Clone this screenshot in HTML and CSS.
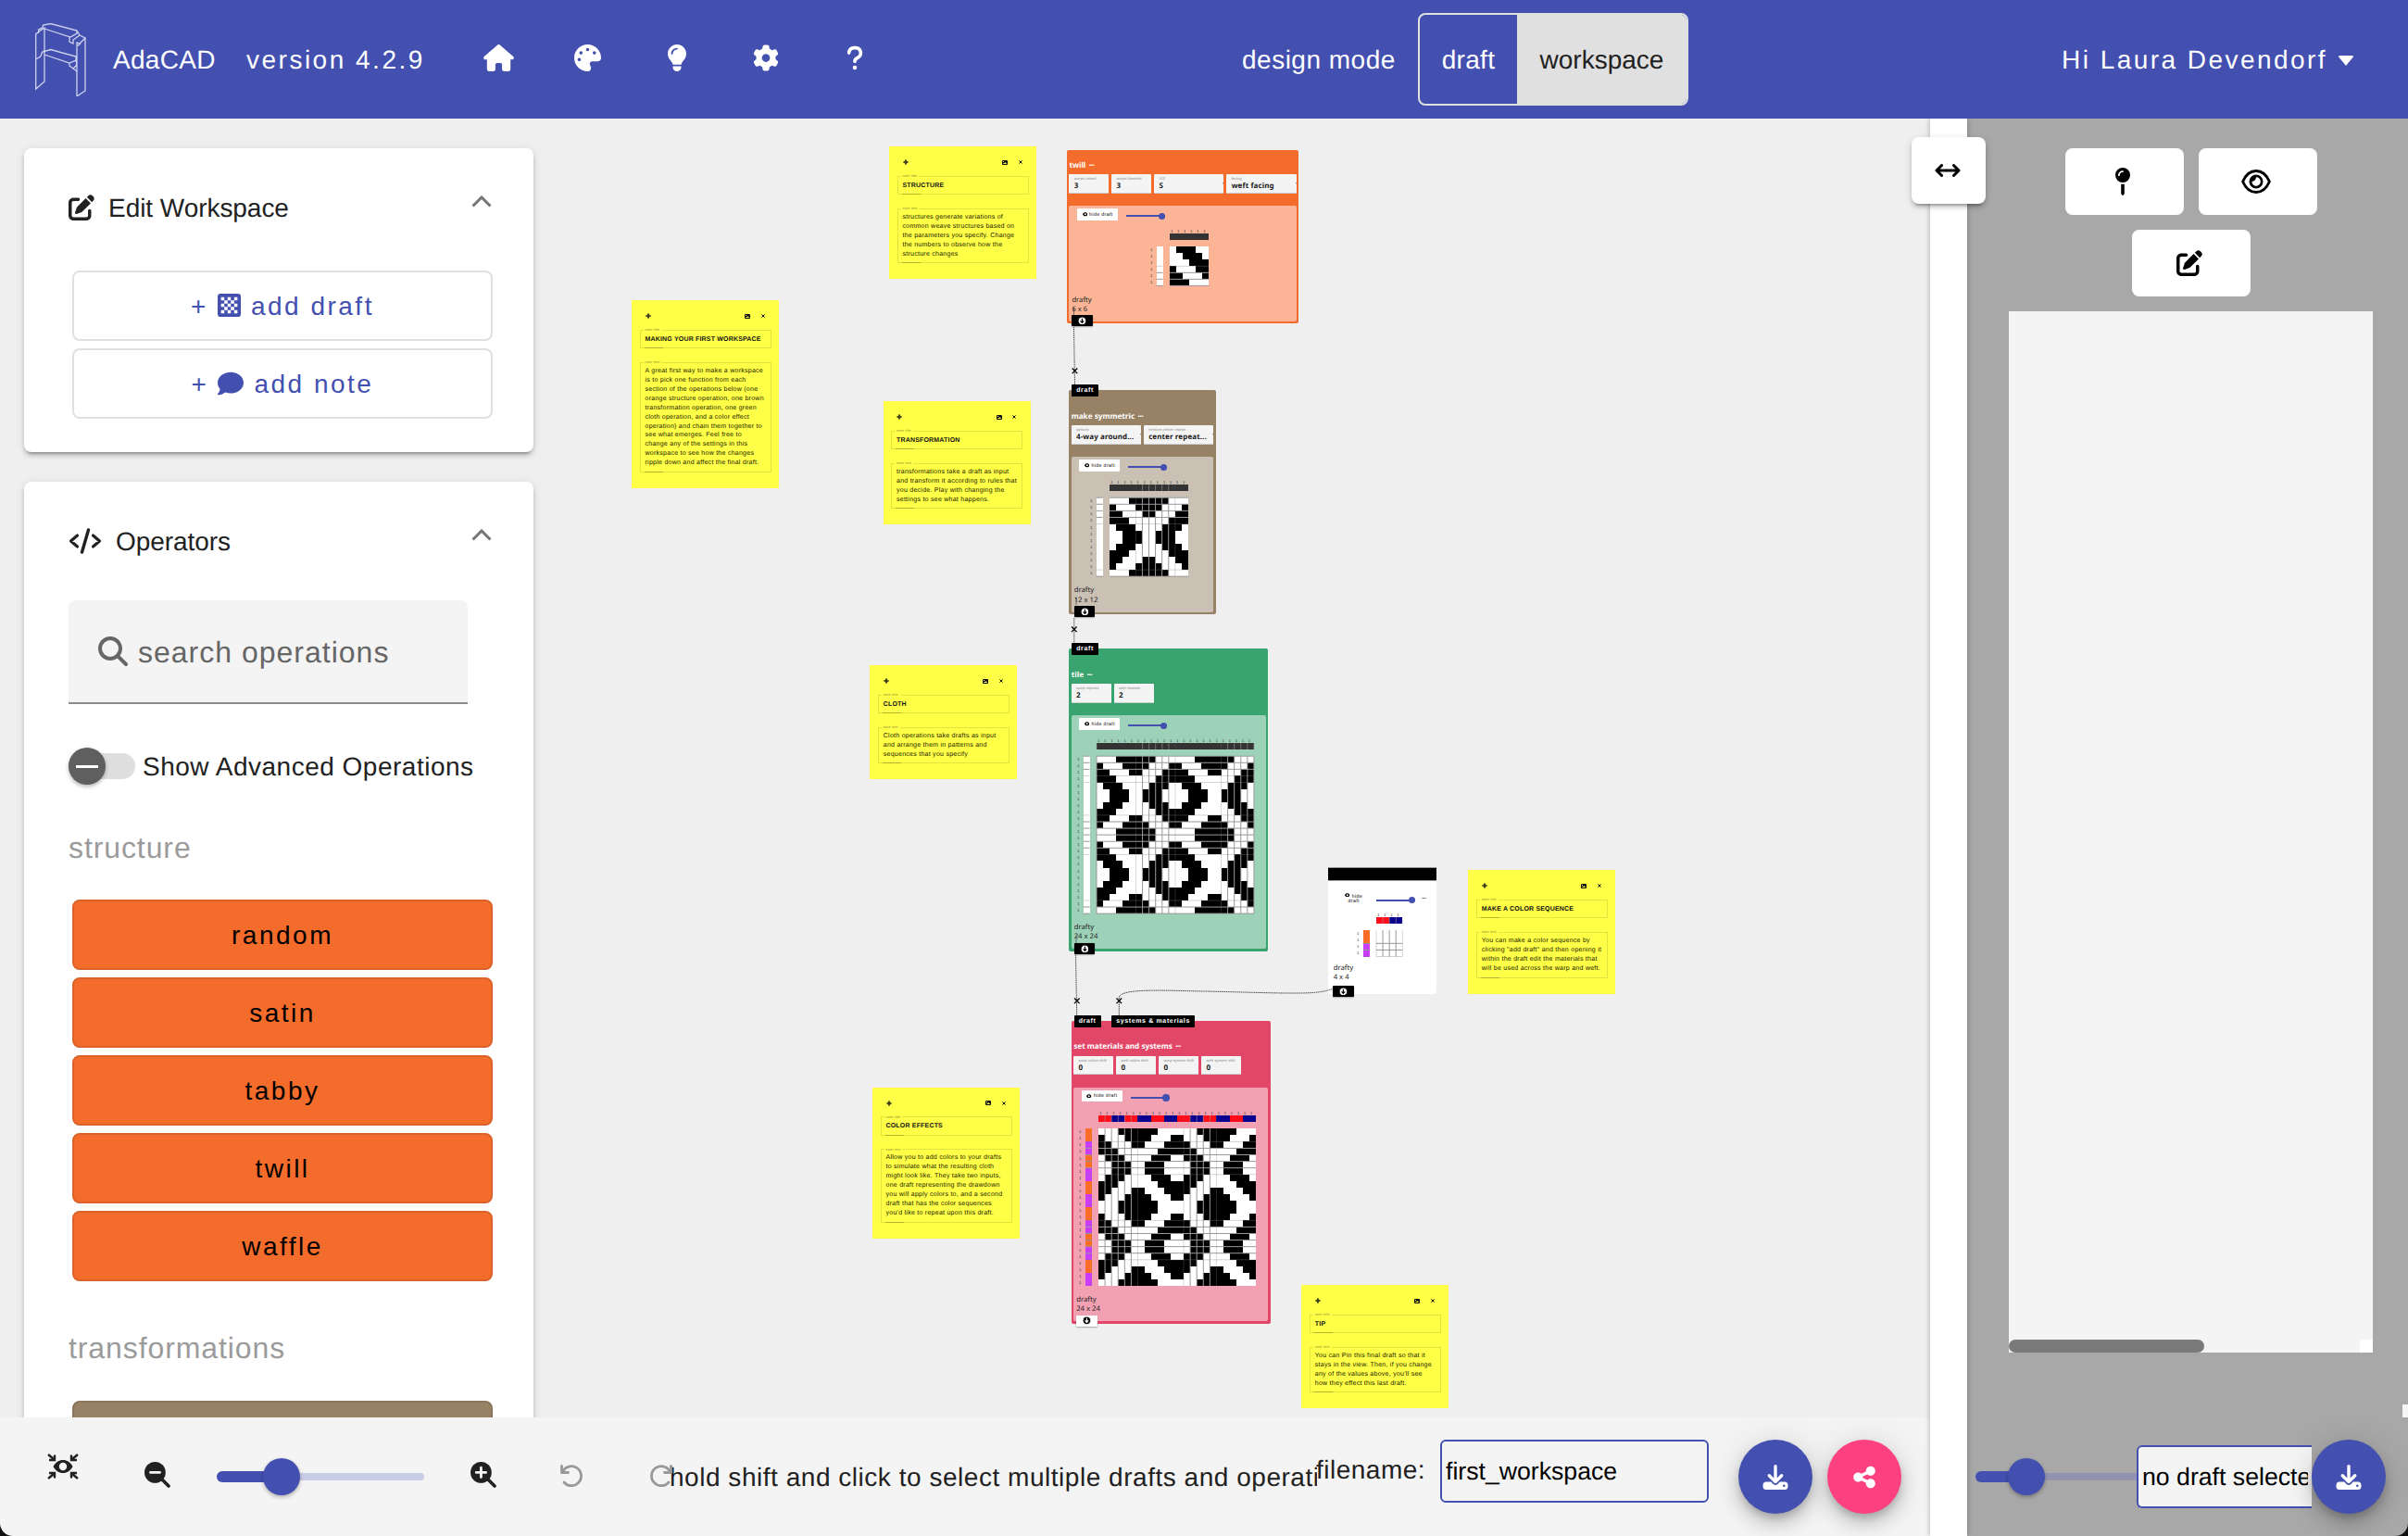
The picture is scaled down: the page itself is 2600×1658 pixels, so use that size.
FILE: index.html
```html
<!DOCTYPE html>
<html lang="en">
<head>
<meta charset="utf-8">
<title>AdaCAD</title>
<link rel="stylesheet" href="styles.css">
</head>
<body>
<svg class="defs" width="0" height="0">
  <symbol id="i-home" viewBox="0 0 576 512"><path d="M575.8 255.5c0 18-15 32.1-32 32.1h-32l.7 160.2c0 2.7-.2 5.4-.5 8.1V472c0 22.1-17.9 40-40 40H456c-1.1 0-2.2 0-3.3-.1c-1.4 .1-2.8 .1-4.2 .1H416 392c-22.1 0-40-17.9-40-40V448 384c0-17.7-14.3-32-32-32H256c-17.7 0-32 14.3-32 32v64 24c0 22.1-17.9 40-40 40H160 128.1c-1.5 0-3-.1-4.5-.2c-1.2 .1-2.4 .2-3.6 .2H104c-22.1 0-40-17.9-40-40V360c0-.9 0-1.9 .1-2.8V287.6H32c-18 0-32-14-32-32.1c0-9 3-17 10-24L266.4 8c7-7 15-8 22-8s15 2 21 7L564.8 231.5c8 7 12 15 11 24z"/></symbol>
  <symbol id="i-palette" viewBox="0 0 512 512"><path d="M512 256c0 .9 0 1.8 0 2.7c-.4 36.5-33.6 61.3-70.1 61.3H344c-26.5 0-48 21.5-48 48c0 3.4 .4 6.7 1 9.9c2.1 10.2 6.5 20 10.8 29.9c6.1 13.8 12.1 27.5 12.1 42c0 31.8-21.6 60.7-53.4 62c-3.5 .1-7 .2-10.6 .2C114.6 512 0 397.4 0 256S114.6 0 256 0S512 114.6 512 256zM128 288a32 32 0 1 0 -64 0 32 32 0 1 0 64 0zm0-96a32 32 0 1 0 0-64 32 32 0 1 0 0 64zM288 96a32 32 0 1 0 -64 0 32 32 0 1 0 64 0zm96 96a32 32 0 1 0 0-64 32 32 0 1 0 0 64z"/></symbol>
  <symbol id="i-bulb" viewBox="0 0 384 512"><path d="M272 384c9.6-31.9 29.5-59.1 49.2-86.2c5.2-7.1 10.4-14.2 15.4-21.4c19.8-28.5 31.4-63 31.4-100.3C368 78.8 289.2 0 192 0S16 78.8 16 176c0 37.3 11.6 71.9 31.4 100.3c5 7.2 10.2 14.3 15.4 21.4c19.8 27.1 39.7 54.4 49.2 86.2H272zM192 512c44.2 0 80-35.8 80-80V416H112v16c0 44.2 35.8 80 80 80zM112 176c0 8.8-7.2 16-16 16s-16-7.2-16-16c0-61.9 50.1-112 112-112c8.8 0 16 7.2 16 16s-7.2 16-16 16c-44.2 0-80 35.8-80 80z"/></symbol>
  <symbol id="i-gear" viewBox="0 0 512 512"><path d="M495.9 166.6c3.2 8.7 .5 18.4-6.4 24.6l-43.3 39.4c1.1 8.3 1.7 16.8 1.7 25.4s-.6 17.1-1.7 25.4l43.3 39.4c6.9 6.2 9.6 15.9 6.4 24.6c-4.4 11.9-9.7 23.3-15.8 34.3l-4.7 8.1c-6.6 11-14 21.4-22.1 31.2c-5.9 7.2-15.7 9.6-24.5 6.8l-55.7-17.7c-13.4 10.3-28.2 18.9-44 25.4l-12.5 57.1c-2 9.1-9 16.3-18.2 17.8c-13.8 2.3-28 3.5-42.5 3.5s-28.7-1.2-42.5-3.5c-9.2-1.5-16.2-8.7-18.2-17.8l-12.5-57.1c-15.8-6.5-30.6-15.1-44-25.4L83.1 425.9c-8.8 2.8-18.6 .3-24.5-6.8c-8.1-9.8-15.5-20.2-22.1-31.2l-4.7-8.1c-6.1-11-11.4-22.4-15.8-34.3c-3.2-8.7-.5-18.4 6.4-24.6l43.3-39.4C64.6 273.1 64 264.6 64 256s.6-17.1 1.7-25.4L22.4 191.2c-6.9-6.2-9.6-15.9-6.4-24.6c4.4-11.9 9.7-23.3 15.8-34.3l4.7-8.1c6.6-11 14-21.4 22.1-31.2c5.9-7.2 15.7-9.6 24.5-6.8l55.7 17.7c13.4-10.3 28.2-18.9 44-25.4l12.5-57.1c2-9.1 9-16.3 18.2-17.8C227.3 1.2 241.5 0 256 0s28.7 1.2 42.5 3.5c9.2 1.5 16.2 8.7 18.2 17.8l12.5 57.1c15.8 6.5 30.6 15.1 44 25.4l55.7-17.7c8.8-2.8 18.6-.3 24.5 6.8c8.1 9.8 15.5 20.2 22.1 31.2l4.7 8.1c6.1 11 11.4 22.4 15.8 34.3zM256 336a80 80 0 1 0 0-160 80 80 0 1 0 0 160z"/></symbol>
  <symbol id="i-question" viewBox="0 0 320 512"><path d="M80 160c0-35.3 28.7-64 64-64h32c35.3 0 64 28.7 64 64v3.6c0 21.8-11.1 42.1-29.4 53.8l-42.2 27.1c-25.2 16.2-40.4 44.1-40.4 74V320c0 17.7 14.3 32 32 32s32-14.3 32-32v-1.4c0-8.2 4.2-15.8 11-20.2l42.2-27.1c36.6-23.6 58.8-64.1 58.8-107.7V160c0-70.7-57.3-128-128-128H144C73.3 32 16 89.3 16 160c0 17.7 14.3 32 32 32s32-14.3 32-32zm80 320a40 40 0 1 0 0-80 40 40 0 1 0 0 80z"/></symbol>
  <symbol id="i-edit" viewBox="0 0 512 512"><path d="M471.6 21.7c-21.9-21.9-57.3-21.9-79.2 0L362.3 51.7l97.9 97.9 30.1-30.1c21.9-21.9 21.9-57.3 0-79.2L471.6 21.7zm-299.2 220c-6.1 6.1-10.8 13.6-13.5 21.9l-29.6 88.8c-2.9 8.6-.6 18.1 5.8 24.6s15.9 8.7 24.6 5.8l88.8-29.6c8.2-2.7 15.7-7.4 21.9-13.5L437.7 172.3 339.7 74.3 172.4 241.7zM96 64C43 64 0 107 0 160V416c0 53 43 96 96 96H352c53 0 96-43 96-96V320c0-17.7-14.3-32-32-32s-32 14.3-32 32v96c0 17.7-14.3 32-32 32H96c-17.7 0-32-14.3-32-32V160c0-17.7 14.3-32 32-32h96c17.7 0 32-14.3 32-32s-14.3-32-32-32H96z"/></symbol>
  <symbol id="i-comment" viewBox="0 0 512 512"><path d="M512 240c0 114.900-114.600 208-256 208c-37.100 0-72.300-6.400-104.100-17.900c-11.900 8.700-31.300 20.600-54.300 30.600C73.600 471.100 44.700 480 16 480c-6.500 0-12.300-3.900-14.800-9.900c-2.500-6-1.100-12.800 3.400-17.400c.3-.3 .7-.7 1.300-1.400c1.100-1.200 2.800-3.100 4.900-5.700c4.100-5 9.600-12.400 15.200-21.600c10-16.600 19.500-38.400 21.400-62.900C17.700 326.800 0 285.100 0 240C0 125.100 114.600 32 256 32s256 93.100 256 208z"/></symbol>
  <symbol id="i-board" viewBox="0 0 24 24"><path fill-rule="evenodd" d="M3 0h18a3 3 0 0 1 3 3v18a3 3 0 0 1-3 3H3a3 3 0 0 1-3-3V3a3 3 0 0 1 3-3zM3.500 3.500v3.400h3.400V3.500zm6.800 0v3.400h3.400V3.500zm6.800 0v3.400h3.400V3.500zM6.900 6.900v3.400h3.400V6.900zm6.800 0v3.400h3.400V6.900zM3.500 10.300v3.400h3.400v-3.400zm6.800 0v3.400h3.400v-3.400zm6.800 0v3.400h3.400v-3.400zM6.900 13.700v3.400h3.400v-3.400zm6.800 0v3.400h3.400v-3.400zM3.500 17.100v3.400h3.400v-3.400zm6.800 0v3.400h3.400v-3.400zm6.800 0v3.400h3.400v-3.400z"/></symbol>
  <symbol id="i-download" viewBox="0 0 512 512"><path d="M288 32c0-17.700-14.300-32-32-32s-32 14.300-32 32V274.700l-73.400-73.400c-12.500-12.500-32.800-12.500-45.300 0s-12.500 32.800 0 45.300l128 128c12.500 12.500 32.800 12.500 45.300 0l128-128c12.500-12.500 12.500-32.800 0-45.300s-32.800-12.500-45.300 0L288 274.700V32zM64 352c-35.300 0-64 28.700-64 64v32c0 35.300 28.700 64 64 64H448c35.300 0 64-28.700 64-64V416c0-35.300-28.700-64-64-64H346.500l-45.300 45.300c-25 25-65.500 25-90.500 0L165.500 352H64zm368 56a24 24 0 1 1 0 48 24 24 0 1 1 0-48z"/></symbol>
  <symbol id="i-share" viewBox="0 0 448 512"><path d="M352 224c53 0 96-43 96-96s-43-96-96-96s-96 43-96 96c0 4 .2 8 .7 11.900l-94.100 47C145.400 170.200 121.900 160 96 160c-53 0-96 43-96 96s43 96 96 96c25.900 0 49.400-10.200 66.600-26.900l94.100 47c-.5 3.900-.7 7.800-.7 11.900c0 53 43 96 96 96s96-43 96-96s-43-96-96-96c-25.900 0-49.400 10.200-66.600 26.900l-94.100-47c.5-3.900 .7-7.800 .7-11.900s-.2-8-.7-11.900l94.100-47C302.600 213.800 326.100 224 352 224z"/></symbol>
  <symbol id="i-search" viewBox="0 0 512 512"><path d="M416 208c0 45.900-14.900 88.300-40 122.700L502.600 457.400c12.500 12.500 12.500 32.800 0 45.300s-32.800 12.500-45.300 0L330.700 376c-34.400 25.200-76.800 40-122.700 40C93.100 416 0 322.900 0 208S93.100 0 208 0S416 93.100 416 208zM208 352a144 144 0 1 0 0-288 144 144 0 1 0 0 288z"/></symbol>
  <symbol id="i-out" viewBox="0 0 28 28"><circle cx="11.400" cy="11.400" r="11.400"/><path d="M19 19l7 7" stroke="currentColor" stroke-width="3.600" stroke-linecap="round"/><path d="M6.500 11.400h10" stroke="#f4f4f4" stroke-width="2.800" stroke-linecap="round"/></symbol>
  <symbol id="i-in" viewBox="0 0 28 28"><circle cx="11.400" cy="11.400" r="11.400"/><path d="M19 19l7 7" stroke="currentColor" stroke-width="3.600" stroke-linecap="round"/><path d="M6.200 11.400h10.400M11.400 6.200v10.400" stroke="#f4f4f4" stroke-width="2.800" stroke-linecap="round"/></symbol>
  <symbol id="i-fit" viewBox="0 0 34 28"><path fill-rule="evenodd" d="M6.500 14C9 9.200 12.500 7 17 7s8 2.200 10.500 7C25 18.800 21.500 21 17 21S9 18.800 6.500 14zM17 9.800a4.200 4.200 0 1 0 0 8.400 4.200 4.200 0 1 0 0-8.400z"/><path d="M1 1l6 5M2 7h6V1.500M33 1l-6 5M32 7h-6V1.500M1 27l6-5M2 21h6v5.500M33 27l-6-5M32 21h-6v5.500" fill="none" stroke="currentColor" stroke-width="2.400"/></symbol>
  <symbol id="i-undo" viewBox="0 0 26 26"><path d="M2.500 2.500v7h7" fill="none" stroke="currentColor" stroke-width="2.800" stroke-linecap="round" stroke-linejoin="round"/><path d="M3.500 8.800A10.500 10.500 0 1 1 5 20" fill="none" stroke="currentColor" stroke-width="2.800" stroke-linecap="round"/></symbol>
  <symbol id="i-pin" viewBox="0 0 16 30"><path fill-rule="evenodd" d="M8 0a8 8 0 1 1 0 16A8 8 0 1 1 8 0zM8 3.200A5 5 0 0 0 3 8.200a.9.900 0 0 0 1.800 0A3.200 3.200 0 0 1 8 5a.9.900 0 0 0 0-1.800z"/><path d="M6.200 17.600q1.800.5 3.600 0V28q-1.800 4-3.600 0z"/></symbol>
  <symbol id="i-eye" viewBox="0 0 32 26"><path d="M1.600 13C4.800 5.500 9.800 1.500 16 1.500S27.200 5.500 30.400 13C27.200 20.500 22.200 24.500 16 24.500S4.800 20.500 1.600 13z" fill="none" stroke="currentColor" stroke-width="2.800"/><path fill-rule="evenodd" d="M16 5.500a7.500 7.500 0 1 1 0 15 7.500 7.500 0 1 1 0-15zm0 2.800c-.2 2.700-1.800 4.500-4.600 4.800a4.700 4.700 0 1 0 4.600-4.800z"/></symbol>
  <symbol id="i-wide" viewBox="0 0 28 14"><path d="M2 7h24M7.500 1.500L2 7l5.500 5.500M20.500 1.500L26 7l-5.500 5.500" fill="none" stroke="currentColor" stroke-width="3" stroke-linecap="round" stroke-linejoin="round"/></symbol>
  <symbol id="i-code" viewBox="0 0 36 28"><path d="M9.500 8L2.500 14l7 6M26.500 8l7 6-7 6" fill="none" stroke="currentColor" stroke-width="3.200" stroke-linecap="round" stroke-linejoin="round"/><path d="M21.500 2l-7 24" stroke="currentColor" stroke-width="3.400" stroke-linecap="round"/></symbol>
  <symbol id="i-up" viewBox="0 0 22 13"><path d="M1.500 11.500L11 2l9.500 9.500" fill="none" stroke="currentColor" stroke-width="3"/></symbol>
  <symbol id="i-move" viewBox="0 0 6 6"><path d="M3 0l1.300 1.400H1.700zM3 6L1.700 4.600h2.600zM0 3l1.400-1.300v2.600zM6 3L4.600 4.300V1.700zM2.400 1h1.200v4H2.400zM1 2.400h4v1.200H1z"/></symbol>
  <symbol id="i-image" viewBox="0 0 6 5"><path fill-rule="evenodd" d="M.7 0h4.600l.7.700v3.600l-.7.700H.7L0 4.300V.7zM1 1v.9h1V1zM1 4h4L3.700 2 2.700 3.200l-.6-.5z"/></symbol>
  <symbol id="i-close" viewBox="0 0 4 4"><path d="M.4.400l3.200 3.200M3.600.4L.4 3.600" stroke="currentColor" stroke-width="1"/></symbol>
  <symbol id="i-down" viewBox="0 0 9 9"><circle cx="4.500" cy="4.500" r="4.400"/><path class="arrow" d="M4.500 1.800v4M2.600 4.500l1.900 2 1.900-2" fill="none" stroke-width="1.200"/></symbol>
  <symbol id="i-seye" viewBox="0 0 6 5"><path fill-rule="evenodd" d="M0 2.500C.8.800 1.800.2 3 .2s2.200.6 3 2.300C5.200 4.200 4.200 4.800 3 4.800S.8 4.200 0 2.500zM3 1.400a1.100 1.100 0 1 0 0 2.200 1.100 1.100 0 1 0 0-2.200z"/></symbol>
</svg>

<header class="topbar">
  <svg class="logo" viewBox="0 0 55 79"><path d="M.7 71V11.500L10 5v58zM.7 11.500l3-1.500V7l4-2 1-3 8-1.500L45 8v3l-7 4-28-9M45 8l3 5-7 5v4l-4-2v-5M48 13l6 3-6 6-3-1v4l4-3M54 16v57l-9 6V22M.7 39l5-3 2-5 9-2.500L44 36v4l-7 3-27-9M44 40l1 6M37 43v3l4 3 4 3M41 49l4-4"/></svg>
  <span class="brand">AdaCAD</span>
  <span class="version">version 4.2.9</span>
  <nav class="topicons">
    <svg class="ti-home"><use href="#i-home"/></svg>
    <svg class="ti-palette"><use href="#i-palette"/></svg>
    <svg class="ti-bulb"><use href="#i-bulb"/></svg>
    <svg class="ti-gear"><use href="#i-gear"/></svg>
    <svg class="ti-q"><use href="#i-question"/></svg>
  </nav>
  <span class="mode-label">design mode</span>
  <div class="mode"><span class="mode-draft">draft</span><span class="mode-ws">workspace</span></div>
  <div class="user">Hi Laura Devendorf<i class="caret"></i></div>
</header>

<main class="main">
  <section class="workspace">
    <div class="canvas">
      <aside class="side">
        <div class="card">
          <div class="card-head"><svg class="ic28"><use href="#i-edit"/></svg><h2>Edit Workspace</h2><svg class="chev"><use href="#i-up"/></svg></div>
          <div class="btns first">
            <button class="btn outline">+ <svg class="ic-board"><use href="#i-board"/></svg> add draft</button>
            <button class="btn outline">+ <svg class="ic28"><use href="#i-comment"/></svg> add note</button>
          </div>
        </div>
        <div class="card grow">
          <div class="card-head"><svg class="ic-code"><use href="#i-code"/></svg><h2>Operators</h2><svg class="chev"><use href="#i-up"/></svg></div>
          <div class="search"><svg><use href="#i-search"/></svg><span>search operations</span></div>
          <div class="toggle"><span class="track"><span class="knob"></span></span><span class="toggle-label">Show Advanced Operations</span></div>
          <h3 class="group">structure</h3>
          <div class="btns">
            <button class="btn orange">random</button>
            <button class="btn orange">satin</button>
            <button class="btn orange">tabby</button>
            <button class="btn orange">twill</button>
            <button class="btn orange">waffle</button>
          </div>
          <h3 class="group second">transformations</h3>
          <div class="btns"><button class="btn brown"></button></div>
        </div>
      </aside>

      <article class="note n-making">
        <div class="note-head"><svg class="m"><use href="#i-move"/></svg><svg class="p"><use href="#i-image"/></svg><svg class="c"><use href="#i-close"/></svg></div>
        <div class="nf title"><span class="legend">note title</span><b>MAKING YOUR FIRST WORKSPACE</b></div>
        <div class="nf text"><span class="legend">note text</span><p>A great first way to make a workspace<br>is to pick one function from each<br>section of the operations below (one<br>orange structure operation, one brown<br>transformation operation, one green<br>cloth operation, and a color effect<br>operation) and chain them together to<br>see what emerges. Feel free to<br>change any of the settings in this<br>workspace to see how the changes<br>ripple down and affect the final draft.</p></div>
      </article>
      <article class="note n-structure">
        <div class="note-head"><svg class="m"><use href="#i-move"/></svg><svg class="p"><use href="#i-image"/></svg><svg class="c"><use href="#i-close"/></svg></div>
        <div class="nf title"><span class="legend">note title</span><b>STRUCTURE</b></div>
        <div class="nf text"><span class="legend">note text</span><p>structures generate variations of<br>common weave structures based on<br>the parameters you specify. Change<br>the numbers to observe how the<br>structure changes</p></div>
      </article>
      <article class="note n-transformation">
        <div class="note-head"><svg class="m"><use href="#i-move"/></svg><svg class="p"><use href="#i-image"/></svg><svg class="c"><use href="#i-close"/></svg></div>
        <div class="nf title"><span class="legend">note title</span><b>TRANSFORMATION</b></div>
        <div class="nf text"><span class="legend">note text</span><p>transformations take a draft as input<br>and transform it according to rules that<br>you decide. Play with changing the<br>settings to see what happens.</p></div>
      </article>
      <article class="note n-cloth">
        <div class="note-head"><svg class="m"><use href="#i-move"/></svg><svg class="p"><use href="#i-image"/></svg><svg class="c"><use href="#i-close"/></svg></div>
        <div class="nf title"><span class="legend">note title</span><b>CLOTH</b></div>
        <div class="nf text"><span class="legend">note text</span><p>Cloth operations take drafts as input<br>and arrange them in patterns and<br>sequences that you specify</p></div>
      </article>
      <article class="note n-effects">
        <div class="note-head"><svg class="m"><use href="#i-move"/></svg><svg class="p"><use href="#i-image"/></svg><svg class="c"><use href="#i-close"/></svg></div>
        <div class="nf title"><span class="legend">note title</span><b>COLOR EFFECTS</b></div>
        <div class="nf text"><span class="legend">note text</span><p>Allow you to add colors to your drafts<br>to simulate what the resulting cloth<br>might look like. They take two inputs,<br>one draft representing the drawdown<br>you will apply colors to, and a second<br>draft that has the color sequences<br>you'd like to repeat upon this draft.</p></div>
      </article>
      <article class="note n-sequence">
        <div class="note-head"><svg class="m"><use href="#i-move"/></svg><svg class="p"><use href="#i-image"/></svg><svg class="c"><use href="#i-close"/></svg></div>
        <div class="nf title"><span class="legend">note title</span><b>MAKE A COLOR SEQUENCE</b></div>
        <div class="nf text"><span class="legend">note text</span><p>You can make a color sequence by<br>clicking "add draft" and then opening it<br>within the draft edit the materials that<br>will be used across the warp and weft.</p></div>
      </article>
      <article class="note n-tip">
        <div class="note-head"><svg class="m"><use href="#i-move"/></svg><svg class="p"><use href="#i-image"/></svg><svg class="c"><use href="#i-close"/></svg></div>
        <div class="nf title"><span class="legend">note title</span><b>TIP</b></div>
        <div class="nf text"><span class="legend">note text</span><p>You can Pin this final draft so that it<br>stays in the view. Then, if you change<br>any of the values above, you'll see<br>how they effect this last draft.</p></div>
      </article>

      <article class="op op-twill">
        <h4>twill <i>•••</i></h4>
        <div class="params"><label class="num"><small>warps raised</small>3</label><label class="num"><small>warps lowered</small>3</label><label class="sel"><small>S/Z</small>S</label><label class="sel"><small>facing</small>weft facing</label></div>
        <div class="body">
          <div class="tools"><span class="hide"><svg><use href="#i-seye"/></svg>hide draft</span><span class="mini"></span></div>
          <svg class="draft" data-kind="twill"></svg>
          <p class="cap">drafty<br>6 x 6</p>
        </div>
        <span class="outlet"><svg><use href="#i-down"/></svg></span>
      </article>
      <article class="op fed op-sym">
        <div class="inlets"><span>draft</span></div>
        <h4>make symmetric <i>•••</i></h4>
        <div class="params"><label class="sel"><small>options</small>4-way around...</label><label class="sel"><small>remove center repeat</small>center repeat...</label></div>
        <div class="body">
          <div class="tools"><span class="hide"><svg><use href="#i-seye"/></svg>hide draft</span><span class="mini"></span></div>
          <svg class="draft" data-kind="symmetric"></svg>
          <p class="cap">drafty<br>12 x 12</p>
        </div>
        <span class="outlet"><svg><use href="#i-down"/></svg></span>
      </article>
      <article class="op fed op-tile">
        <div class="inlets"><span>draft</span></div>
        <h4>tile <i>•••</i></h4>
        <div class="params"><label class="num"><small>warp-repeats</small>2</label><label class="num"><small>weft-repeats</small>2</label></div>
        <div class="body">
          <div class="tools"><span class="hide"><svg><use href="#i-seye"/></svg>hide draft</span><span class="mini"></span></div>
          <svg class="draft" data-kind="tile"></svg>
          <p class="cap">drafty<br>24 x 24</p>
        </div>
        <span class="outlet"><svg><use href="#i-down"/></svg></span>
      </article>
      <article class="op fed op-color">
        <div class="inlets"><span>draft</span><span>systems &amp; materials</span></div>
        <h4>set materials and systems <i>•••</i></h4>
        <div class="params"><label class="num"><small>warp colors shift</small>0</label><label class="num"><small>weft colors shift</small>0</label><label class="num"><small>warp system shift</small>0</label><label class="num"><small>weft system shift</small>0</label></div>
        <div class="body">
          <div class="tools"><span class="hide"><svg><use href="#i-seye"/></svg>hide draft</span><span class="mini"></span></div>
          <svg class="draft" data-kind="color"></svg>
          <p class="cap">drafty<br>24 x 24</p>
        </div>
        <span class="outlet light"><svg><use href="#i-down"/></svg></span>
      </article>
      <article class="seed">
        <div class="seed-bar"></div>
        <div class="seed-tools"><span class="seed-hide"><svg><use href="#i-seye"/></svg> hide<br>draft</span><span class="mini"></span><i>•••</i></div>
        <svg class="draft" data-kind="seed"></svg>
        <p class="cap">drafty<br>4 x 4</p>
        <span class="outlet"><svg><use href="#i-down"/></svg></span>
      </article>

      <svg class="wires" viewBox="0 128 2084 1402">
        <g class="wire"><path d="M1159.500 332V340M1159.500 353L1160.500 415M1162 646V653M1159.800 667V694M1162 1010V1018M1161.500 1031L1162.700 1096M1208.300 1096V1077C1208.500 1066 1262 1069.500 1300 1070C1350 1071 1395 1073 1418 1071.500Q1430 1070.500 1439 1067.500"/></g>
        <g class="cross"><path d="M1157.700 397.500l5.600 5.600m0-5.600l-5.600 5.600M1157 676.500l5.600 5.600m0-5.600l-5.600 5.600M1160 1077.500l5.600 5.600m0-5.600l-5.600 5.600M1205.500 1077.500l5.600 5.600m0-5.600l-5.600 5.600"/></g>
      </svg>
    </div>
    <footer class="bar">
      <svg class="b-fit"><use href="#i-fit"/></svg>
      <svg class="b-out"><use href="#i-out"/></svg>
      <span class="slider s-left"><span class="fill"></span></span>
      <svg class="b-in"><use href="#i-in"/></svg>
      <svg class="b-undo"><use href="#i-undo"/></svg>
      <svg class="b-redo"><use href="#i-undo"/></svg>
      <span class="hint">hold shift and click to select multiple drafts and operations</span>
      <span class="fname">filename:</span>
      <input class="field f-left" value="first_workspace">
      <button class="fab"><svg><use href="#i-download"/></svg></button>
      <button class="fab pink"><svg class="sh"><use href="#i-share"/></svg></button>
    </footer>
  </section>

  <div class="divider"><button class="resize"><svg><use href="#i-wide"/></svg></button></div>

  <section class="viewer">
    <div class="viewer-body">
      <div class="vbtns">
        <button><svg class="v-pin"><use href="#i-pin"/></svg></button>
        <button><svg class="v-eye"><use href="#i-eye"/></svg></button>
        <button><svg class="ic28"><use href="#i-edit"/></svg></button>
      </div>
      <div class="frame"><div class="scroll"><span class="thumb"></span><span class="corner"></span></div></div>
      <span class="sliver"></span>
    </div>
    <footer class="vbar">
      <span class="slider s-right"><span class="fill"></span></span>
      <input class="field f-right" value="no draft selected">
      <button class="fab"><svg><use href="#i-download"/></svg></button>
    </footer>
  </section>
</main>
<script src="script.js"></script>
</body>
</html>
```

FILE: styles.css
```css
* { box-sizing: border-box; }
html { background: #111; }
body {
  margin: 0; width: 2600px; height: 1658px; overflow: hidden;
  display: flex; flex-direction: column;
  font: 28px "Liberation Sans", Arial, sans-serif; color: #212121;
  text-rendering: geometricPrecision; border-radius: 0 0 14px 14px;
}
h2, h3, h4, p { margin: 0; font-weight: 400; }
button { font: inherit; margin: 0; padding: 0; border: 0; color: inherit; }
svg { fill: currentColor; flex: none; display: block; }
.defs { position: absolute; }
.ic28 { width: 28px; height: 28px; }

/* top bar */
.topbar { height: 128px; flex: none; background: #4350b0; color: #fff; display: flex; align-items: center; padding-right: 58px; line-height: 32px; }
.logo { width: 55px; height: 79px; margin-left: 38px; fill: none; stroke: #cfd3ee; stroke-width: 1.300; }
.brand { margin-left: 29px; width: 144px; letter-spacing: .3px; padding-top: 1px; }
.version { letter-spacing: 2.500px; width: 256px; padding-top: 1px; }
.topicons { display: flex; align-items: center; width: 820px; margin-top: -3px; }
.ti-home { width: 33px; height: 29px; }
.ti-palette { width: 29px; height: 29px; margin-left: 65px; }
.ti-bulb { width: 22px; height: 29px; margin-left: 71px; }
.ti-gear { width: 28px; height: 29px; margin-left: 71px; }
.ti-q { width: 20px; height: 29px; margin-left: 72px; }
.mode-label { letter-spacing: .5px; width: 190px; margin-left: -1px; padding-top: 1px; }
.mode { display: flex; height: 100px; width: 292px; border: 2px solid #e0e0e0; border-radius: 8px; line-height: 98px; overflow: hidden; }
.mode-draft { width: 105px; text-align: center; letter-spacing: .3px; }
.mode-ws { flex: 1; background: #e0e0e0; color: #212121; text-align: center; }
.user { margin-left: auto; letter-spacing: 2.450px; display: flex; align-items: center; padding-top: 1px; }
.caret { border: 9px solid transparent; border-top: 11px solid #fff; border-bottom: 0; margin-left: 11px; border-radius: 3px; margin-top: 2px; }

/* main split */
.main { flex: 1; display: flex; min-height: 0; }
.workspace { width: 2084px; display: flex; flex-direction: column; }
.canvas { height: 1402px; background: #efefef; position: relative; overflow: hidden; }

/* side panel */
.side { width: 550px; height: 1402px; margin-left: 26px; padding-top: 32px; display: flex; flex-direction: column; gap: 32px; }
.card { background: #fff; border-radius: 8px; box-shadow: 0 6px 2px -4px rgba(0,0,0,.2), 0 4px 4px rgba(0,0,0,.14), 0 2px 10px rgba(0,0,0,.12); height: 328px; flex: none; padding-left: 48px; }
.card.grow { height: 1060px; }
.card-head { height: 128px; display: flex; align-items: center; padding-right: 45px; }
.card-head h2 { font-size: 28px; margin-left: 15px; padding-top: 1px; letter-spacing: -.05px; }
.ic-code { width: 36px; height: 28px; }
.chev { width: 22px; height: 13px; margin-left: auto; margin-bottom: 14px; color: #757575; }
.btns { display: flex; flex-direction: column; gap: 8px; width: 454px; margin-left: 4px; }
.btns.first { margin-top: 4px; }
.btn { height: 76px; border-radius: 8px; border: 2px solid; letter-spacing: 2.500px; padding-top: 1px; display: flex; align-items: center; justify-content: center; gap: 10px; }
.btn.outline { background: #fff; border-color: #e0e0e0; color: #4350b0; gap: 11px; }
.btn.outline svg { margin: -2px 0 0 -1px; }
.ic-board { width: 25px; height: 25px; }
.btn.orange { background: #f36c2c; border-color: #db6229; color: #000; }
.btn.brown { background: #978265; border-color: #88755b; }
.search { width: 431px; height: 112px; background: #f4f4f4; border-radius: 8px 8px 0 0; border-bottom: 2px solid #8c8c8c; padding-left: 32px; display: flex; align-items: center; color: #666; font-size: 32px; letter-spacing: 1px; }
.search svg { width: 32px; height: 32px; margin-right: 11px; }
.search span { padding-top: 2px; }
.toggle { margin-top: 47px; height: 40px; display: flex; align-items: center; letter-spacing: .5px; }
.track { width: 72px; height: 28px; border-radius: 14px; background: #dedede; display: flex; align-items: center; }
.knob { width: 40px; height: 40px; flex: none; border-radius: 50%; background: #5f5f5f; box-shadow: 0 2px 4px rgba(0,0,0,.3); display: flex; align-items: center; justify-content: center; }
.knob::after { content: ""; width: 24px; height: 3px; background: #fff; }
.toggle-label { margin-left: 8px; padding-top: 1px; }
.group { height: 124px; padding-top: 12px; line-height: 112px; font-size: 32px; letter-spacing: .9px; color: #9b9b9b; }
.group.second { height: 129px; padding-top: 16px; }

/* notes */
.note { position: absolute; width: 159px; background: #ffff48; padding: 11px 8.500px 17px; color: #222; }
.note-head { height: 12px; display: flex; align-items: center; padding-left: 6px; color: #111; }
.note-head .m { width: 6px; height: 6px; margin-right: 101.500px; }
.note-head .p { width: 6px; height: 5px; margin-right: 11.500px; }
.note-head .c { width: 4px; height: 4px; }
.nf { border: 1px solid rgba(0,0,0,.11); padding: 4px 5px; position: relative; }
.nf::after { content: ""; position: absolute; left: 4px; bottom: -1px; width: 20px; height: 1px; background: rgba(0,0,0,.22); }
.legend { position: absolute; left: 3px; top: -2.500px; padding: 0 2px; background: #ffff48; font-size: 3.800px; line-height: 4px; color: #8f8f30; letter-spacing: .15px; }
.nf.title { margin-top: 8.500px; height: 20.500px; font-size: 7px; line-height: 12.500px; letter-spacing: .18px; white-space: nowrap; color: #111; }
.nf.text { margin-top: 14.500px; }
.nf p { font-size: 7px; line-height: 9.950px; letter-spacing: .26px; white-space: nowrap; color: #222200; position: relative; top: .3px; }
.n-making { left: 682px; top: 196px; }
.n-structure { left: 960px; top: 30px; }
.n-transformation { left: 953.500px; top: 305px; }
.n-cloth { left: 939.300px; top: 590px; }
.n-effects { left: 942px; top: 1045.500px; }
.n-sequence { left: 1585.300px; top: 811.300px; }
.n-tip { left: 1405.300px; top: 1259px; }

/* operations */
.op { position: absolute; border-radius: 2px; padding: 11.500px 2.700px 2.400px; }
.op.fed { padding-top: 23.500px; }
.op h4 { font: 700 8.200px/10px "Noto Sans", sans-serif; color: #fff; height: 14.500px; white-space: nowrap; }
.op h4 i { font: 700 5px/10px "Noto Sans", sans-serif; margin-left: 1.500px; vertical-align: .8px; }
.params { display: flex; gap: 3px; }
.params label { height: 20.700px; background: #f4f4f4; border-radius: 1px; border-bottom: 1px solid #ccc; padding: 3px 0 0 5.300px; font: 700 8px/9px "Noto Sans", sans-serif; letter-spacing: .1px; white-space: nowrap; color: #1a1a1a; overflow: hidden; position: relative; }
.params small { display: block; font: 4px/4.500px "Liberation Sans", sans-serif; letter-spacing: .1px; color: #888; height: 5.300px; }
.num { width: 43px; }
.sel { width: 75.300px; }
.sel::after { content: ""; position: absolute; right: 0; top: 9px; border: 1.500px solid transparent; border-top: 2px solid #777; border-right: 0; }
.body { margin-top: 13.500px; border-radius: 2px; padding-top: 3px; position: relative; }
.tools { display: flex; height: 12.700px; padding-left: 8.500px; }
.hide { width: 44.300px; background: #fff; border-radius: 1px; display: flex; align-items: center; padding-left: 5.700px; font-size: 5.200px; letter-spacing: .4px; color: #000; white-space: nowrap; }
.hide svg { width: 5.500px; height: 4.600px; margin-right: 2px; }
.mini { width: 42px; height: 2px; margin: 7.300px 0 0 8.800px; background: #4350b0; display: flex; align-items: center; justify-content: flex-end; }
.mini::after { content: ""; width: 7.400px; height: 7.400px; border-radius: 50%; background: #4350b0; flex: none; }
.draft { display: block; margin-top: 9.300px; overflow: visible; }
.cap { font: 7.700px/10.200px "Noto Sans", sans-serif; color: #222; margin: 10px 0 0 3px; height: 29px; }
.outlet { position: absolute; left: 5.700px; bottom: -3.300px; width: 22.700px; height: 12.700px; background: #000; color: #fff; border-radius: 1px; display: flex; align-items: center; justify-content: center; box-shadow: 0 1px 1.500px rgba(0,0,0,.3); }
.outlet svg { width: 8.800px; height: 8.800px; stroke: #000; }
.outlet svg circle { stroke: none; }
.outlet.light { background: #fff; color: #000; }
.outlet.light svg { stroke: #fff; }
.inlets { position: absolute; left: 3px; top: -5.700px; display: flex; gap: 11.300px; }
.inlets span { background: #000; color: #fff; font-weight: 700; font-size: 7px; letter-spacing: .64px; line-height: 13px; height: 12.700px; padding: 0 5.200px; border-radius: 1px; white-space: nowrap; }
.op-twill { left: 1151.700px; top: 34px; width: 250.500px; height: 187px; background: #f36c2c; }
.op-twill .body { background: #fbb596; height: 125px; }
.op-twill .draft { margin-left: 88px; }
.op-sym { left: 1154px; top: 293px; width: 158.700px; height: 242px; background: #978265; }
.op-sym .body { background: #cbc0b4; height: 167.500px; }
.op-sym .draft { margin-left: 20px; }
.op-tile { left: 1154px; top: 572px; width: 215.300px; height: 327px; background: #3aa470; }
.op-tile .body { background: #9dd2b9; height: 252px; }
.op-tile .draft { margin-left: 6.500px; }
.op-color { left: 1156.500px; top: 973.500px; width: 215.400px; height: 327.400px; background: #e24767; }
.op-color .body { background: #f2a1b3; height: 252px; }
.op-color .draft { margin-left: 6px; }
.seed { position: absolute; left: 1433.700px; top: 808px; width: 117.600px; height: 137px; background: #fff; border-radius: 2px; }
.seed-bar { height: 14.700px; background: #000; border: 1px solid #999; border-width: 1px 0; }
.seed-tools { display: flex; height: 28px; padding: 13px 0 0 16px; font-size: 5.200px; color: #000; }
.seed-hide { width: 24px; line-height: 6px; text-align: center; letter-spacing: .4px; white-space: nowrap; }
.seed-hide svg { display: inline-block; width: 5.500px; height: 4.600px; }
.seed-tools .mini { margin: 7px 0 0 12.500px; }
.seed-tools i { font: 4px/6px "Noto Sans", sans-serif; margin: 4.500px 0 0 7px; }
.seed .draft { margin: 6px 0 0 31px; }
.seed .cap { margin: 7.800px 0 0 6px; }
.wires { position: absolute; left: 0; top: 0; width: 2084px; height: 1402px; pointer-events: none; }
.wire { fill: none; stroke: #444; stroke-width: 1; stroke-dasharray: 1.200 .6; }
.cross { fill: none; stroke: #000; stroke-width: 1.300; }

/* bottom bar */
.bar { height: 128px; background: #f4f4f4; display: flex; align-items: center; }
.b-fit { width: 34px; height: 28px; margin: 0 71px 22px 51px; }
.b-out, .b-in { width: 28px; height: 28px; margin-bottom: 4px; }
.slider { height: 8px; background: #c9cce6; border-radius: 4px; display: flex; align-items: center; flex: none; }
.slider .fill { height: 12px; background: #4350b0; border-radius: 6px; display: flex; align-items: center; justify-content: flex-end; }
.slider .fill::after { content: ""; width: 40px; height: 40px; border-radius: 50%; background: #4350b0; margin-right: -20px; flex: none; box-shadow: 0 2px 4px rgba(0,0,0,.3); }
.s-left { width: 224px; margin: 0 50px; }
.s-left .fill { width: 69.500px; }
.b-undo, .b-redo { width: 26px; height: 26px; color: #999; margin: 0 0 3px 68px; }
.b-redo { transform: scaleX(-1); margin-left: 71px; }
.hint { width: 699px; margin-left: -4px; overflow: hidden; white-space: nowrap; letter-spacing: .53px; line-height: 34px; flex: none; margin-top: 1px; }
.fname { letter-spacing: .5px; width: 134px; margin: 0 0 15px -1px; flex: none; }
.field { border: 2px solid #4350b0; border-radius: 6px; background: #f4f4f4; height: 68px; font: 26.670px "Liberation Sans", Arial, sans-serif; padding: 0 4px; color: #000; margin: 0; outline: 0; text-rendering: geometricPrecision; flex: none; }
.f-left { width: 290px; margin: 0 32px 12px 0; }
.fab { width: 80px; height: 80px; border-radius: 50%; background: #4350b0; color: #fff; display: flex; align-items: center; justify-content: center; flex: none; box-shadow: 0 6px 10px -2px rgba(0,0,0,.2), 0 12px 20px rgba(0,0,0,.14), 0 2px 36px rgba(0,0,0,.12); }
.fab svg { width: 28px; height: 27px; }
.fab .sh { width: 24px; }
.fab.pink { background: #fc4080; margin-left: 16px; }

/* divider */
.divider { width: 40px; background: #fff; position: relative; z-index: 2; box-shadow: 0 0 6px rgba(0,0,0,.3); clip-path: inset(0 -30px); }
.resize { position: absolute; left: -20px; top: 20px; width: 80px; height: 72px; border-radius: 8px; background: #fff; box-shadow: 0 6px 2px -4px rgba(0,0,0,.2), 0 4px 4px rgba(0,0,0,.14), 0 2px 10px rgba(0,0,0,.12); display: flex; align-items: center; justify-content: center; color: #000; }
.resize svg { width: 28px; height: 14px; margin: 0 2px 1px 0; }

/* viewer */
.viewer { flex: 1; background: #a8a8a8; display: flex; flex-direction: column; }
.viewer-body { height: 1402px; padding: 32px 38px 0 45px; position: relative; }
.vbtns { display: flex; flex-wrap: wrap; justify-content: center; gap: 16px; color: #000; }
.vbtns button { width: 128px; height: 72px; background: #fff; border-radius: 8px; display: flex; align-items: center; justify-content: center; padding-right: 3px; }
.v-pin { width: 16px; height: 30px; }
.v-eye { width: 32px; height: 26px; }
.frame { margin-top: 16px; height: 1124px; background: #f4f4f4; display: flex; align-items: flex-end; }
.scroll { height: 14px; flex: 1; display: flex; justify-content: space-between; }
.thumb { width: 211px; background: #7a7a7a; border-radius: 7px; }
.corner { width: 14px; background: #fff; }
.sliver { position: absolute; right: 0; bottom: 0; width: 6px; height: 14px; background: #f4f4f4; }
.vbar { height: 128px; display: flex; align-items: center; padding-left: 9px; }
.s-right { width: 175px; background: #9193b1; border-radius: 4px 0 0 4px; }
.s-right .fill { width: 55px; }
.f-right { width: 189px; border-right: 0; border-radius: 6px 0 0 6px; margin-left: -1px; }
.vbar .fab { margin-left: 0; }
```

FILE: script.js
```js
// Draws every draft preview: warp row, weft column and drawdown.
const NS = 'http://www.w3.org/2000/svg';
const SYM = [
  '...######...', '#...####...#', '##...##...##', '###......###',
  '.###....###.', '..###..###..', '..###..###..', '.###....###.',
  '###......###', '##...##...##', '#...####...#', '...######...'
];
const range = (a, b) => Array.from({ length: b - a + 1 }, (_, i) => a + i);
const KINDS = {
  twill: { n: 6, cell: 7.03, on: (r, c) => (c - r + 11) % 6 < 3, v: [], h: [4, 5, 6], fv: [], fh: [3] },
  symmetric: { n: 12, cell: 7.08, on: (r, c) => SYM[r][c] === '#', v: range(5, 9), h: [0, 1, 2, 3, 12], fv: [4, 10], fh: [4, 11] },
  tile: { n: 24, cell: 7.08, on: (r, c) => SYM[r % 12][c % 12] === '#', v: [0, ...range(7, 11), ...range(20, 24)], h: [0, 1, 2, ...range(10, 14), 23, 24], fv: [6, 12, 19], fh: [3, 4, 9, 15, 22] },
  color: { n: 24, cell: 7.08, on: (r, c) => SYM[r % 12][c % 12] === '#', v: [...range(1, 5), ...range(14, 17)], h: [...range(3, 6), ...range(15, 19)], fv: [6, 13, 18], fh: [2, 7, 14, 20], colored: true },
  seed: { n: 4, cell: 7.08, on: () => false, v: [1, 2, 3], h: [2, 3], fv: [0, 4], fh: [4], colored: true }
};
const WARP = ['#ff0d1b', '#ff0d1b', '#0a0090', '#0a0090'];
const WEFT = ['#fb6c26', '#fb6c26', '#c93cfa', '#c93cfa'];

function add(svg, name, attrs, text) {
  const el = document.createElementNS(NS, name);
  for (const k in attrs) el.setAttribute(k, attrs[k]);
  if (text) el.textContent = text;
  svg.appendChild(el);
}

document.querySelectorAll('svg.draft').forEach(svg => {
  const k = KINDS[svg.dataset.kind], s = k.cell, size = k.n * s, X = 21, Y = 19.2;
  svg.setAttribute('width', X + size);
  svg.setAttribute('height', Y + size);
  const crisp = { 'shape-rendering': 'crispEdges' };
  add(svg, 'rect', { x: X, y: 5, width: size, height: 7, fill: '#333', ...crisp });
  add(svg, 'rect', { x: 6.7, y: Y, width: 7, height: size, fill: '#fff', ...crisp });
  add(svg, 'rect', { x: X, y: Y, width: size, height: size, fill: '#fff', ...crisp });
  for (let i = 0; i < k.n; i++) {
    add(svg, 'text', { x: X + i * s + 1, y: 3.6, 'font-size': 4.5, fill: '#333' }, '1');
    add(svg, 'text', { x: 0, y: Y + i * s + 5, 'font-size': 4.5, fill: '#333' }, '1');
    if (k.colored) {
      add(svg, 'rect', { x: X + i * s, y: 5, width: s, height: 7, fill: WARP[i % 4], ...crisp });
      add(svg, 'rect', { x: 6.7, y: Y + i * s, width: 7, height: s, fill: WEFT[i % 4], ...crisp });
    }
    for (let j = 0; j < k.n; j++)
      if (k.on(i, j)) add(svg, 'rect', { x: X + j * s, y: Y + i * s, width: s, height: s, fill: '#000', ...crisp });
  }
  const rule = (i, vertical, color) => {
    const p = i * s - 0.5;
    if (vertical) {
      add(svg, 'rect', { x: X + p, y: Y, width: 1, height: size, fill: color });
      add(svg, 'rect', { x: X + p, y: 5, width: 1, height: 7, fill: color, opacity: 0.6 });
    } else {
      add(svg, 'rect', { x: X, y: Y + p, width: size, height: 1, fill: color });
      add(svg, 'rect', { x: 6.7, y: Y + p, width: 7, height: 1, fill: color });
    }
  };
  k.v.forEach(i => rule(i, true, '#999'));
  k.h.forEach(i => rule(i, false, '#999'));
  k.fv.forEach(i => rule(i, true, 'rgba(128,128,128,.3)'));
  k.fh.forEach(i => rule(i, false, 'rgba(128,128,128,.35)'));
});
```
